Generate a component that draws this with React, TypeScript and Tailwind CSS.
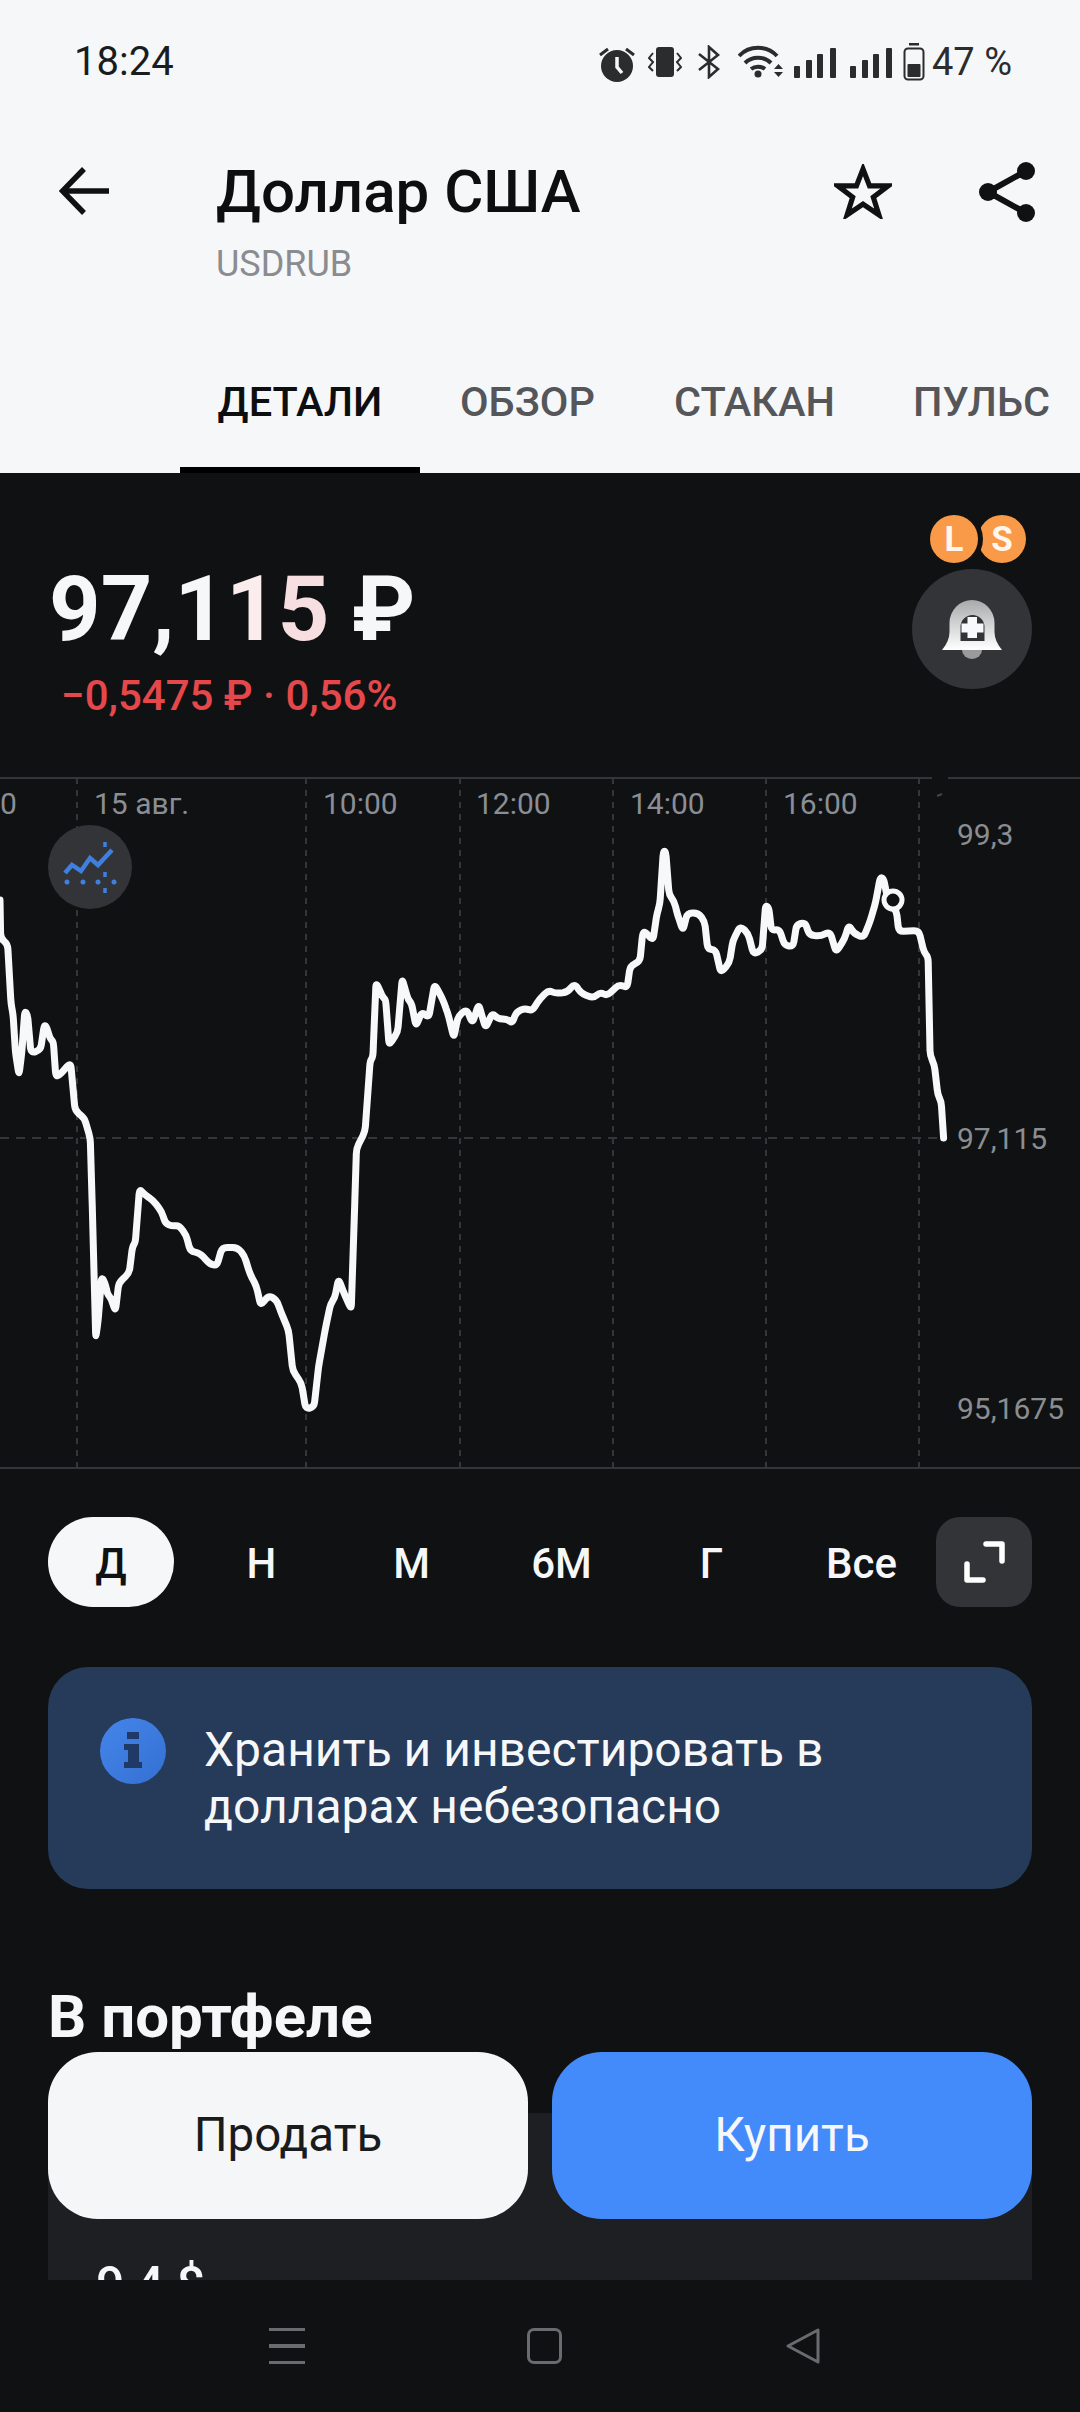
import React from "react";

const z3: [number, number][] = [[0,0],[2,100],[22,115],[32,270],[38,300],[45,400],[55,458],[63,400],[72,290],[80,300],[90,400],[118,392],[128,328],[135,330],[145,362],[155,370],[162,460],[172,458],[205,425],[218,550],[245,570],[262,622],[268,800],[278,1145],[285,1100],[295,985],[305,1000],[312,1030],[322,1040],[335,1075],[345,1000],[375,975],[385,905],[393,895],[405,755],[420,770],[445,785],[470,815],[480,845],[500,852],[520,850],[540,875],[553,918],[580,922],[610,952],[630,955],[645,908],[690,908],[710,930],[725,975],[745,1010],[757,1060],[780,1033],[803,1045],[815,1075],[838,1125],[850,1230],[875,1262],[888,1330],[912,1325],[925,1220],[945,1120],[960,1055],[972,1040],[983,990],[1000,1030],[1020,1070],[1030,800],[1035,650],[1060,605],[1075,420],[1083,410],[1092,215],[1112,255],[1120,260],[1130,380],[1155,345],[1168,205],[1185,260],[1195,270],[1208,330],[1225,292],[1245,308],[1262,220],[1285,258],[1300,295],[1318,360],[1330,305],[1355,285],[1372,322],[1390,272],[1410,335],[1430,295],[1445,310],[1475,312],[1487,322],[1500,292],[1525,283],[1545,290],[1568,258]];
const z4: [number, number][] = [[25,458],[45,465],[80,462],[100,443],[120,465],[155,475],[175,462],[195,470],[230,445],[253,453],[262,405],[290,395],[298,335],[305,330],[328,350],[340,290],[348,270],[358,155],[365,155],[375,250],[390,265],[400,295],[415,328],[428,290],[460,290],[478,308],[487,368],[510,370],[525,420],[550,398],[560,350],[582,318],[605,335],[620,380],[645,370],[655,272],[665,280],[672,328],[695,325],[710,360],[735,363],[745,315],[770,310],[782,338],[815,340],[842,330],[860,375],[885,345],[897,315],[912,335],[940,343],[960,305],[975,265],[988,212],[998,215],[1010,262],[1035,285],[1042,330],[1100,328],[1115,375],[1127,385],[1133,600],[1145,620],[1155,685],[1165,700],[1172,780]];
const pts = [
  ...z3.map(([x, y]) => [x / 2.904, 900 + y / 2.613]),
  ...z4.map(([x, y]) => [540 + x / 2.904, 780 + y / 2.178]),
];

// rounds every vertex of the price line, like the soft curve of the reference
function roundedPath(p: number[][], radius: number) {
  let d = `M${p[0][0].toFixed(1)} ${p[0][1].toFixed(1)}`;
  for (let i = 1; i < p.length - 1; i++) {
    const [ax, ay] = p[i - 1];
    const [bx, by] = p[i];
    const [cx, cy] = p[i + 1];
    const l1 = Math.hypot(bx - ax, by - ay) || 1;
    const l2 = Math.hypot(cx - bx, cy - by) || 1;
    const r1 = Math.min(radius, l1 / 2);
    const r2 = Math.min(radius, l2 / 2);
    const sx = bx - ((bx - ax) * r1) / l1;
    const sy = by - ((by - ay) * r1) / l1;
    const ex = bx + ((cx - bx) * r2) / l2;
    const ey = by + ((cy - by) * r2) / l2;
    d += `L${sx.toFixed(1)} ${sy.toFixed(1)}Q${bx.toFixed(1)} ${by.toFixed(1)} ${ex.toFixed(1)} ${ey.toFixed(1)}`;
  }
  const last = p[p.length - 1];
  return d + `L${last[0].toFixed(1)} ${last[1].toFixed(1)}`;
}
const line = roundedPath(pts, 5);

const font = { fontFamily: "Roboto, 'Noto Sans', sans-serif" };

function Signal() {
  return (
    <svg width="43" height="30" viewBox="0 0 43 30" fill="#2b2c2e">
      <rect x="0" y="18" width="6" height="12" rx="1" />
      <rect x="12" y="12" width="6" height="18" rx="1" />
      <rect x="23" y="6" width="6" height="24" rx="1" />
      <rect x="36" y="0" width="6" height="30" rx="1" />
    </svg>
  );
}

function StatusIcons() {
  return (
    <div className="flex items-center">
      <svg width="38" height="36" viewBox="0 0 38 36" className="mt-[3px]">
        <circle cx="19" cy="20" r="16" fill="#2b2c2e" />
        <path d="M19 11v10l5 6" stroke="#f6f7f9" strokeWidth="3.5" fill="none" />
        <path d="M2 9l8-6M36 9l-8-6" stroke="#2b2c2e" strokeWidth="3" fill="none" />
      </svg>
      <svg width="34" height="32" viewBox="0 0 34 32" className="ml-[12px]">
        <rect x="8" y="1" width="18" height="30" rx="3" fill="#2b2c2e" />
        <path d="M5 7L1 12l4 4-4 5 4 4M29 7l4 5-4 4 4 5-4 4" stroke="#2b2c2e" strokeWidth="2" fill="none" />
      </svg>
      <svg width="22" height="34" viewBox="0 0 22 34" className="ml-[16px]">
        <path d="M1 9l19 15-9 8V2l9 8L1 25" stroke="#2b2c2e" strokeWidth="2.6" fill="none" />
      </svg>
      <svg width="46" height="34" viewBox="0 0 46 34" className="ml-[18px]">
        <path d="M1 11C11 0 29 0 39 11M7 18c7-7 19-7 26 0M13 24c4-3 10-3 14 0" stroke="#2b2c2e" strokeWidth="4" fill="none" />
        <circle cx="20" cy="29" r="3.5" fill="#2b2c2e" />
        <path d="M36 24h9l-4.500-5zM36 27h9l-4.500 5z" fill="#2b2c2e" />
      </svg>
      <div className="ml-[10px] mt-[2px]"><Signal /></div>
      <div className="ml-[13px] mt-[2px]"><Signal /></div>
      <svg width="22" height="38" viewBox="0 0 22 38" className="ml-[10px]">
        <rect x="6" y="0" width="10" height="2.500" fill="#2b2c2e" />
        <rect x="1.500" y="5.500" width="19" height="31" rx="3.500" stroke="#2b2c2e" strokeWidth="2" fill="none" />
        <rect x="4.500" y="21" width="13" height="13" rx="1" fill="#2b2c2e" />
      </svg>
      <span className="ml-[7px] text-[38px] leading-[44px] text-[#2b2c2e] whitespace-nowrap">47 %</span>
    </div>
  );
}

function Bell() {
  return (
    <svg width="60" height="59" viewBox="0 0 60 59">
      <defs>
        <linearGradient id="bellg" x1="0" y1="0" x2="0" y2="1">
          <stop offset="0" stopColor="#a8a9aa" />
          <stop offset="1" stopColor="#ffffff" />
        </linearGradient>
      </defs>
      <path fillRule="evenodd" fill="url(#bellg)" d="M0 50C5 44 7.500 38 7.500 32V23A22.500 23 0 0 1 52.500 23V32C52.500 38 55 44 60 50ZM18.500 41H42.500V27A12 12 0 0 0 18.500 27Z" />
      <path fill="#f8f9fa" d="M25.500 17H35V23.500H41.500V32.500H35V38H25.500V32.500H19.500V23.500H25.500Z" />
      <path fill="#9a9a9a" d="M20 50H40A10 9 0 0 1 20 50Z" />
    </svg>
  );
}

function TimeLabel({ className, children }: { className: string; children: React.ReactNode }) {
  return <span className={`absolute top-[9px] text-[30px] leading-[36px] text-[#8a8e96] whitespace-nowrap ${className}`}>{children}</span>;
}

function Chart() {
  return (
    <div className="relative h-[692px] w-full">
      <svg className="absolute inset-0" width="1080" height="692" viewBox="0 777 1080 692">
        <path d="M0 778H932M948 778H1080M0 1468H1080" stroke="#33353a" strokeWidth="2" fill="none" />
        <path d="M77 778V1468M306 778V1468M460 778V1468M613 778V1468M766 778V1468M919 778V1468" stroke="#34363a" strokeWidth="2" strokeDasharray="6 6" fill="none" />
        <path d="M0 1138H940" stroke="#34363a" strokeWidth="2" strokeDasharray="9 7" fill="none" />
        <path d="M937 796l5-2" stroke="#44464a" strokeWidth="2" fill="none" />
        <path d={line} stroke="#f7f8fa" strokeWidth="7" strokeLinejoin="round" strokeLinecap="round" fill="none" />
        <circle cx="893" cy="900" r="9" fill="#101113" stroke="#f7f8fa" strokeWidth="5" />
      </svg>
      <TimeLabel className="left-0">0</TimeLabel>
      <TimeLabel className="left-[94px]">15 авг.</TimeLabel>
      <TimeLabel className="left-[323px]">10:00</TimeLabel>
      <TimeLabel className="left-[476px]">12:00</TimeLabel>
      <TimeLabel className="left-[630px]">14:00</TimeLabel>
      <TimeLabel className="left-[783px]">16:00</TimeLabel>
      <span className="absolute left-[957px] top-[40px] text-[30px] leading-[36px] text-[#8b8d90]">99,3</span>
      <span className="absolute left-[957px] top-[344px] text-[30px] leading-[36px] text-[#8b8d90]">97,115</span>
      <span className="absolute left-[957px] top-[614px] text-[30px] leading-[36px] text-[#8b8d90]">95,1675</span>
      <div className="absolute left-[48px] top-[48px] flex h-[84px] w-[84px] items-center justify-center rounded-full bg-[#333437]">
        <svg width="84" height="84" viewBox="0 0 84 84" fill="none">
          <path d="M17 48l7-8 9 6 9-13 8 7 14-15" stroke="#3f7fe0" strokeWidth="4.500" />
          <path d="M19 57h.01M35 57h.01M50 57h.01M66 57h.01" stroke="#3f7fe0" strokeWidth="5" strokeLinecap="round" />
          <path d="M57 17v5M57 47v5M57 63v5" stroke="#3f7fe0" strokeWidth="3.500" />
        </svg>
      </div>
    </div>
  );
}

function RangeTabs() {
  const items = ["Н", "М", "6М", "Г", "Все"];
  return (
    <div className="mt-[48px] flex items-center pl-[48px]">
      <div className="flex h-[90px] w-[126px] items-center justify-center rounded-full bg-[#f6f7f9] pt-[3px] text-[42px] font-medium text-[#101113]">Д</div>
      {items.map((t) => (
        <div key={t} className="ml-[25px] flex h-[90px] w-[125px] items-center justify-center pt-[3px] text-[42px] font-medium text-[#f6f7f9]">{t}</div>
      ))}
      <div className="ml-[12px] flex h-[90px] w-[96px] items-center justify-center rounded-[24px] bg-[#333437]">
        <svg width="44" height="44" viewBox="0 0 44 44" fill="none" stroke="#fff" strokeWidth="5.500" strokeLinecap="round" strokeLinejoin="round">
          <path d="M24 4H40V21" />
          <path d="M5 24V40H21" />
        </svg>
      </div>
    </div>
  );
}

export default function App() {
  return (
    <div className="flex h-[2412px] w-[1080px] flex-col overflow-hidden bg-[#101113]" style={font}>
      <header className="h-[473px] shrink-0 bg-[#f6f7f9]">
        <div className="flex h-[124px] items-center justify-between pl-[74px] pr-[68px]">
          <span className="text-[40px] leading-[44px] text-[#1b1c1e]">18:24</span>
          <StatusIcons />
        </div>
        <div className="mt-[34px] flex items-start">
          <div className="flex w-[216px] shrink-0 pl-[59px] pt-[9px]">
            <svg width="52" height="48" viewBox="0 0 52 48" fill="none" stroke="#101113" strokeWidth="5.500">
              <path d="M50 24H5" />
              <path d="M25 2L3.500 24L25 46" />
            </svg>
          </div>
          <div className="flex-1">
            <div className="text-[60px] font-medium leading-[68px] text-[#0d0e10]">Доллар США</div>
            <div className="mt-[16px] text-[36px] leading-[44px] text-[#8a8c90]">USDRUB</div>
          </div>
          <div className="flex items-start pr-[45px]">
            <svg width="58" height="55" viewBox="0 0 62 58" className="mt-[6px]" fill="none" stroke="#101113" strokeWidth="5.500">
              <path d="M31 5L38 23H58L42 35L48 54L31 42.500L14 54L20 35L4 23H24Z" />
            </svg>
            <svg width="56" height="60" viewBox="0 0 56 60" className="ml-[87px] mt-[4px]" fill="#101113">
              <circle cx="47" cy="9" r="9" />
              <circle cx="9" cy="30" r="9" />
              <circle cx="47" cy="51" r="9" />
              <path d="M47 9L9 30L47 51" fill="none" stroke="#101113" strokeWidth="6" />
            </svg>
          </div>
        </div>
        <div className="mt-[45px] flex h-[142px] whitespace-nowrap pl-[180px] text-[41.500px] font-medium">
          <div className="relative flex w-[240px] items-center justify-center text-[#0d0e10]">
            ДЕТАЛИ
            <div className="absolute bottom-0 left-0 right-0 h-[6px] bg-black" />
          </div>
          <div className="ml-[40px] flex items-center text-[#555659]">ОБЗОР</div>
          <div className="ml-[79px] flex items-center text-[#555659]">СТАКАН</div>
          <div className="ml-[78px] flex items-center text-[#555659]">ПУЛЬС</div>
        </div>
      </header>

      <main className="relative flex-1 overflow-hidden">
        <section className="flex h-[304px] items-start justify-between">
          <div className="pl-[49px] pt-[87px]">
            <div className="text-[90px] font-bold leading-[100px] text-[#f6f7f9] whitespace-nowrap">
              97,1<span className="text-[#fbeced]">1</span><span className="text-[#f7dfe1]">5</span> ₽
            </div>
            <div className="mt-[11px] pl-[12px] text-[42px] font-medium leading-[50px] text-[#e4484b] whitespace-nowrap">−0,5475 ₽ · 0,56%</div>
          </div>
          <div className="flex flex-col pr-[48px] pt-[42px]">
            <div className="mr-[6px] flex justify-end">
              <div className="relative z-10 flex h-[48px] w-[48px] items-center justify-center rounded-full bg-[#f99a48] text-[35px] font-bold leading-none text-[#fff6ee] ring-[5px] ring-[#101113]">L</div>
              <div className="flex h-[48px] w-[48px] items-center justify-center rounded-full bg-[#f99a48] text-[35px] font-bold leading-none text-[#fff6ee]">S</div>
            </div>
            <div className="mt-[6px] flex h-[120px] w-[120px] items-center justify-center rounded-full bg-[#333437]">
              <Bell />
            </div>
          </div>
        </section>

        <Chart />
        <RangeTabs />

        <div className="mx-[48px] mt-[60px] flex h-[222px] items-start rounded-[40px] bg-[#263a5a] pl-[52px] pt-[51px]">
          <svg width="66" height="66" viewBox="0 0 66 66" className="shrink-0">
            <defs>
              <linearGradient id="infog" x1="0" y1="0" x2="1" y2="1">
                <stop offset="0" stopColor="#4485ea" />
                <stop offset="1" stopColor="#3570d2" />
              </linearGradient>
            </defs>
            <circle cx="33" cy="33" r="33" fill="url(#infog)" />
            <path fill="#1f3a66" d="M27 14h12v7H27zM24 26h15v18h3v6H24v-6h4V32h-4z" />
          </svg>
          <p className="ml-[38px] mt-[3px] text-[48px] leading-[57px] text-[#f6f7f9] whitespace-nowrap">
            Хранить и инвестировать в
            <br />
            долларах небезопасно
          </p>
        </div>

        <h2 className="ml-[48px] mt-[96px] text-[60px] font-bold leading-[64px] text-[#f6f7f9]">В портфеле</h2>

        <div className="mx-[48px] mt-[64px] h-[400px] bg-[#1e1f23] pl-[48px] pt-[144px]">
          <span className="text-[50px] font-medium leading-[56px] text-[#f6f7f9]">9,4 $</span>
        </div>

        <div className="absolute bottom-[61px] left-[48px] right-[48px] flex gap-[24px]">
          <button className="h-[167px] flex-1 rounded-[50px] bg-[#f5f6f8] text-[47.500px] text-[#1a1b1d]">Продать</button>
          <button className="h-[167px] flex-1 rounded-[50px] bg-[#438bfb] text-[47.500px] text-[#f6f7f9]">Купить</button>
        </div>
      </main>

      <nav className="flex h-[132px] shrink-0 items-start pt-[48px]">
        <div className="ml-[269px] flex h-[36px] w-[36px] flex-col justify-between">
          <div className="h-[3px] bg-[#6a6b6e]" />
          <div className="h-[4px] bg-[#6a6b6e]" />
          <div className="h-[3px] bg-[#6a6b6e]" />
        </div>
        <div className="ml-[222px] h-[36px] w-[35px] rounded-[7px] border-[3px] border-[#6a6b6e]" />
        <svg width="36" height="38" viewBox="0 0 36 38" className="ml-[223px] -mt-[1px]" fill="none" stroke="#6a6b6e" strokeWidth="3" strokeLinejoin="round">
          <path d="M33 3V35L3 19Z" />
        </svg>
      </nav>
    </div>
  );
}
